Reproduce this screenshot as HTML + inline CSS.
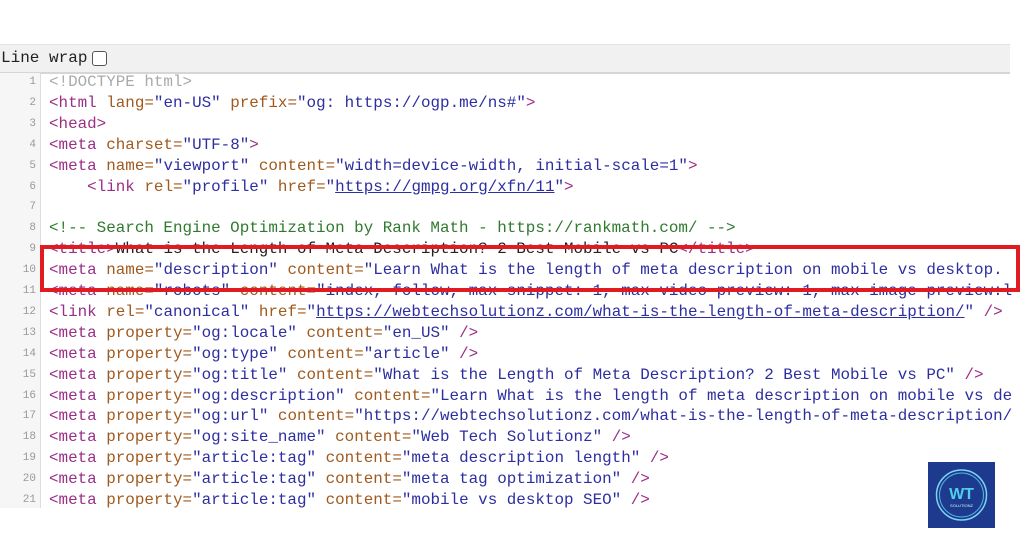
<!DOCTYPE html>
<html><head><style>
body{margin:0;width:1024px;height:555px;background:#fff;position:relative;overflow:hidden;font-family:"Liberation Mono",monospace;}
.bar{position:absolute;left:0;top:44px;width:1010px;height:27px;background:#f1f1f1;border-top:1px solid #e2e2e2;border-bottom:2px solid #d6d6d6;}
.bar span{position:absolute;left:1px;top:4px;font-size:16px;color:#222;}
.cb{position:absolute;left:92px;top:6px;width:13px;height:13px;border:1px solid #555;border-radius:3px;background:#fff;}
.gut{position:absolute;left:0;top:73px;width:40px;height:435px;background:#f6f6f6;border-right:1px solid #ddd;}
.code{position:absolute;left:0;top:72px;width:1012px;height:436px;overflow:hidden;}
.l{position:absolute;left:0;height:21px;line-height:21px;white-space:pre;font-size:15.9px;}
.n{position:absolute;left:0;width:36px;text-align:right;font-size:11px;color:#999;}
.t{position:absolute;left:49px;}
.g{color:#aaa}.p{color:#9b2f86}.a{color:#a05a1e}.v{color:#2d2ea0}.c{color:#2f7a2f}.u{color:#2d2ea0;text-decoration:underline}.k{color:#222}
.box{position:absolute;left:40px;top:245px;width:972px;height:39px;border:4.5px solid #e11b22;}
.logo{position:absolute;left:928px;top:462px;width:67px;height:66px;background:#1d3a8f;}
</style></head><body>
<div class="bar"><span>Line wrap</span><div class="cb"></div></div>
<div class="gut"></div>
<div class="code">
<div class="l" style="top:0px"><span class="n">1</span><span class="t g">&lt;!DOCTYPE html&gt;</span></div>
<div class="l" style="top:20.9px"><span class="n">2</span><span class="t"><span class="p">&lt;html</span> <span class="a">lang=</span><span class="v">"en-US"</span> <span class="a">prefix=</span><span class="v">"og: https://ogp.me/ns#"</span><span class="p">&gt;</span></span></div>
<div class="l" style="top:41.8px"><span class="n">3</span><span class="t p">&lt;head&gt;</span></div>
<div class="l" style="top:62.7px"><span class="n">4</span><span class="t"><span class="p">&lt;meta</span> <span class="a">charset=</span><span class="v">"UTF-8"</span><span class="p">&gt;</span></span></div>
<div class="l" style="top:83.6px"><span class="n">5</span><span class="t"><span class="p">&lt;meta</span> <span class="a">name=</span><span class="v">"viewport"</span> <span class="a">content=</span><span class="v">"width=device-width, initial-scale=1"</span><span class="p">&gt;</span></span></div>
<div class="l" style="top:104.5px"><span class="n">6</span><span class="t">    <span class="p">&lt;link</span> <span class="a">rel=</span><span class="v">"profile"</span> <span class="a">href=</span><span class="v">"</span><span class="u">https://gmpg.org/xfn/11</span><span class="v">"</span><span class="p">&gt;</span></span></div>
<div class="l" style="top:125.4px"><span class="n">7</span></div>
<div class="l" style="top:146.3px"><span class="n">8</span><span class="t c">&lt;!-- Search Engine Optimization by Rank Math - https://rankmath.com/ --&gt;</span></div>
<div class="l" style="top:167.2px"><span class="n">9</span><span class="t"><span class="p">&lt;title&gt;</span><span class="k">What is the Length of Meta Description? 2 Best Mobile vs PC</span><span class="p">&lt;/title&gt;</span></span></div>
<div class="l" style="top:188.1px"><span class="n">10</span><span class="t"><span class="p">&lt;meta</span> <span class="a">name=</span><span class="v">"description"</span> <span class="a">content=</span><span class="v">"Learn What is the length of meta description on mobile vs desktop.</span></span></div>
<div class="l" style="top:209px"><span class="n">11</span><span class="t"><span class="p">&lt;meta</span> <span class="a">name=</span><span class="v">"robots"</span> <span class="a">content=</span><span class="v">"index, follow, max-snippet:-1, max-video-preview:-1, max-image-preview:large"</span></span></div>
<div class="l" style="top:229.9px"><span class="n">12</span><span class="t"><span class="p">&lt;link</span> <span class="a">rel=</span><span class="v">"canonical"</span> <span class="a">href=</span><span class="v">"</span><span class="u">https://webtechsolutionz.com/what-is-the-length-of-meta-description/</span><span class="v">"</span> <span class="p">/&gt;</span></span></div>
<div class="l" style="top:250.8px"><span class="n">13</span><span class="t"><span class="p">&lt;meta</span> <span class="a">property=</span><span class="v">"og:locale"</span> <span class="a">content=</span><span class="v">"en_US"</span> <span class="p">/&gt;</span></span></div>
<div class="l" style="top:271.7px"><span class="n">14</span><span class="t"><span class="p">&lt;meta</span> <span class="a">property=</span><span class="v">"og:type"</span> <span class="a">content=</span><span class="v">"article"</span> <span class="p">/&gt;</span></span></div>
<div class="l" style="top:292.6px"><span class="n">15</span><span class="t"><span class="p">&lt;meta</span> <span class="a">property=</span><span class="v">"og:title"</span> <span class="a">content=</span><span class="v">"What is the Length of Meta Description? 2 Best Mobile vs PC"</span> <span class="p">/&gt;</span></span></div>
<div class="l" style="top:313.5px"><span class="n">16</span><span class="t"><span class="p">&lt;meta</span> <span class="a">property=</span><span class="v">"og:description"</span> <span class="a">content=</span><span class="v">"Learn What is the length of meta description on mobile vs desktop."</span></span></div>
<div class="l" style="top:334.4px"><span class="n">17</span><span class="t"><span class="p">&lt;meta</span> <span class="a">property=</span><span class="v">"og:url"</span> <span class="a">content=</span><span class="v">"https://webtechsolutionz.com/what-is-the-length-of-meta-description/"</span></span></div>
<div class="l" style="top:355.3px"><span class="n">18</span><span class="t"><span class="p">&lt;meta</span> <span class="a">property=</span><span class="v">"og:site_name"</span> <span class="a">content=</span><span class="v">"Web Tech Solutionz"</span> <span class="p">/&gt;</span></span></div>
<div class="l" style="top:376.2px"><span class="n">19</span><span class="t"><span class="p">&lt;meta</span> <span class="a">property=</span><span class="v">"article:tag"</span> <span class="a">content=</span><span class="v">"meta description length"</span> <span class="p">/&gt;</span></span></div>
<div class="l" style="top:397.1px"><span class="n">20</span><span class="t"><span class="p">&lt;meta</span> <span class="a">property=</span><span class="v">"article:tag"</span> <span class="a">content=</span><span class="v">"meta tag optimization"</span> <span class="p">/&gt;</span></span></div>
<div class="l" style="top:418px"><span class="n">21</span><span class="t"><span class="p">&lt;meta</span> <span class="a">property=</span><span class="v">"article:tag"</span> <span class="a">content=</span><span class="v">"mobile vs desktop SEO"</span> <span class="p">/&gt;</span></span></div>
</div>
<div class="box"></div>
<div class="logo"><svg width="67" height="66" viewBox="0 0 67 66"><circle cx="33.5" cy="33" r="25" fill="none" stroke="#7fd3f0" stroke-width="1.5"/><circle cx="33.5" cy="33" r="22" fill="none" stroke="#4fb8e6" stroke-width="1"/><text x="33.5" y="37" text-anchor="middle" font-family="Liberation Sans" font-weight="bold" font-size="16" fill="#4fd0e8">WT</text><text x="33.5" y="45" text-anchor="middle" font-family="Liberation Sans" font-size="4" fill="#cfe">SOLUTIONZ</text></svg></div>
</body></html>
